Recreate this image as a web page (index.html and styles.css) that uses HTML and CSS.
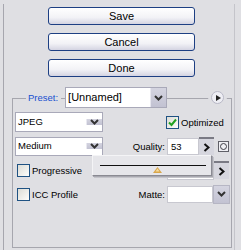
FILE: index.html
```html
<!DOCTYPE html>
<html lang="en">
<head>
    <meta charset="UTF-8">
    <title>Save for Web</title>
    <link rel="stylesheet" href="styles.css">
</head>
<body>
    <div class="frame">
        <div class="buttons">
            <button class="btn">Save</button>
            <button class="btn">Cancel</button>
            <button class="btn">Done</button>
        </div>

        <div class="group">
            <div class="header">
                <span class="preset-label">Preset:</span>
                <div class="select preset">
                    <span class="value">[Unnamed]</span>
                    <span class="arrow"><svg width="9" height="6" viewBox="0 0 9 6"><polyline points="1,1 4.5,4.5 8,1" fill="none" stroke="#333" stroke-width="2"/></svg></span>
                </div>
                <span class="menu-btn"><svg width="5" height="6" viewBox="0 0 5 6"><polygon points="0,0 5,3 0,6" fill="#222"/></svg></span>
            </div>

            <div class="row">
                <div class="select left">
                    <span class="value">JPEG</span>
                    <span class="arrow"><svg width="9" height="6" viewBox="0 0 9 6"><polyline points="1,1 4.5,4.5 8,1" fill="none" stroke="#333" stroke-width="2"/></svg></span>
                </div>
                <span class="label"></span>
                <div class="ctrl">
                    <span class="check checked"><svg width="11" height="11" viewBox="0 0 11 11"><polyline points="2,5.5 4.5,8 9,2.5" fill="none" stroke="#21a121" stroke-width="2"/></svg></span>
                    <span class="check-text">Optimized</span>
                </div>
            </div>

            <div class="row">
                <div class="select left medium">
                    <span class="value">Medium</span>
                    <span class="arrow"><svg width="9" height="6" viewBox="0 0 9 6"><polyline points="1,1 4.5,4.5 8,1" fill="none" stroke="#333" stroke-width="2"/></svg></span>
                </div>
                <span class="label">Quality:</span>
                <div class="ctrl">
                    <span class="field quality">53</span>
                    <span class="step"><svg width="7" height="9" viewBox="0 0 7 9"><polyline points="1.5,1 5.5,4.5 1.5,8" fill="none" stroke="#111" stroke-width="2"/></svg></span>
                    <span class="mask"><span class="dot"></span></span>
                </div>
            </div>

            <div class="row">
                <div class="left">
                    <span class="check"></span>
                    <span class="check-text">Progressive</span>
                </div>
                <span class="label"></span>
                <div class="ctrl">
                    <span class="field blur"></span>
                    <span class="step"><svg width="7" height="9" viewBox="0 0 7 9"><polyline points="1.5,1 5.5,4.5 1.5,8" fill="none" stroke="#111" stroke-width="2"/></svg></span>
                </div>
            </div>

            <div class="row">
                <div class="left">
                    <span class="check"></span>
                    <span class="check-text">ICC Profile</span>
                </div>
                <span class="label">Matte:</span>
                <div class="ctrl">
                    <span class="field matte"></span>
                    <span class="arrow drop"><svg width="9" height="6" viewBox="0 0 9 6"><polyline points="1,1 4.5,4.5 8,1" fill="none" stroke="#333" stroke-width="2"/></svg></span>
                </div>
            </div>

            <div class="slider-pop">
                <span class="track"></span>
                <svg class="thumb" width="9" height="6" viewBox="0 0 9 6"><polygon points="4.5,0 9,6 0,6" fill="#d9a64a"/><polygon points="4.5,1.5 6.5,4.5 2.5,4.5" fill="#f4dca0"/></svg>
            </div>
        </div>
    </div>
</body>
</html>
```

FILE: styles.css
```css
body { margin: 0; background: #dfdfe3; font-family: "Liberation Sans", Arial, sans-serif; font-size: 9.5px; color: #000; }
.frame { margin: 4px 6px 0 3px; height: 246px; border-left: 1px solid #a6a6ae; border-right: 1px solid #c4c4ca; }

.buttons { display: flex; flex-direction: column; gap: 8px; padding: 3px 0 0 44px; }
.btn { width: 147px; height: 18px; padding: 0; border: 1px solid #1d3f83; border-radius: 3px; background: linear-gradient(#ffffff, #f2f2f6 60%, #d4d4e2); font-family: "Liberation Sans", Arial, sans-serif; font-size: 11px; color: #000; line-height: 15px; }

.group { position: relative; box-sizing: border-box; width: 220px; height: 150px; margin: 21px 0 0 8px; border: 1px solid #a6a6ae; padding: 0 1px 0 2px; }
.header { display: flex; align-items: center; height: 21px; margin-top: -12px; }
.preset-label { margin-left: 11px; padding: 0 3px 0 2px; background: #dfdfe3; color: #1850d0; }
.header .select { margin-left: 4px; }
.preset { width: 102px; height: 21px; }
.menu-btn { display: flex; align-items: center; justify-content: center; box-sizing: border-box; width: 13px; height: 13px; margin-left: 44px; padding-left: 1px; border: 1px solid #b8b8c6; border-radius: 50%; background: #eeeef4; box-shadow: 0 0 0 3px #dfdfe3; }

.row { display: flex; align-items: center; height: 20px; margin-top: 4px; }
.left { display: flex; align-items: center; width: 88px; height: 100%; box-sizing: border-box; }
.label { width: 64px; padding-right: 2px; box-sizing: border-box; text-align: right; }
.ctrl { display: flex; align-items: center; width: 63px; height: 100%; }

.select { display: flex; box-sizing: border-box; border: 1px solid #a9a9b9; background: #fff; }
.select.left { height: 20px; }
.select.medium { height: 19px; }
.value { flex: 1; padding-left: 2px; line-height: 18px; }
.preset .value { font-size: 11px; line-height: 19px; }
.arrow { display: flex; align-items: center; justify-content: center; width: 15px; background: linear-gradient(#d4d4e0, #c2c2d2); border-left: 1px solid #e8e8f0; }
.arrow.drop { height: 17px; border: 1px solid #b6b6c4; }

.check { display: flex; align-items: center; justify-content: center; box-sizing: border-box; width: 13px; height: 13px; border: 1px solid #1f5283; background: linear-gradient(135deg, #dcdcd6, #fdfdfb); }
.left .check { margin-left: 2px; }
.ctrl .check { margin-left: -1px; }
.check-text { margin-left: 2px; }

.field { box-sizing: border-box; height: 18px; background: #fff; border: 1px solid #c8c8d0; padding-left: 3px; line-height: 16px; }
.quality { width: 32px; height: 17px; }
.blur { width: 47px; height: 20px; }
.matte { width: 46px; height: 17px; }
.step { display: flex; align-items: center; justify-content: center; box-sizing: border-box; width: 15px; height: 18px; background: #d6d6de; border-top: 2px solid #7a7a84; }
.mask { display: flex; align-items: center; justify-content: center; box-sizing: border-box; width: 11px; height: 11px; margin-left: 4px; border: 1px solid #606068; background: #f0f0f4; }
.dot { width: 7px; height: 7px; box-sizing: border-box; border: 1px solid #404048; border-radius: 50%; }

.slider-pop { position: absolute; left: 79px; top: 56px; width: 120px; height: 21px; box-sizing: border-box; border: 1px solid #8a8a92; border-top-color: #f4f4f6; border-left-color: #f4f4f6; background: #e6e6ea; box-shadow: 1px 1px 0 #a8a8b0, 2px 2px 0 #c4c4ca; }
.track { position: absolute; left: 7px; right: 5px; top: 9px; height: 1px; background: #111; }
.thumb { position: absolute; left: 60px; top: 11px; }
```
